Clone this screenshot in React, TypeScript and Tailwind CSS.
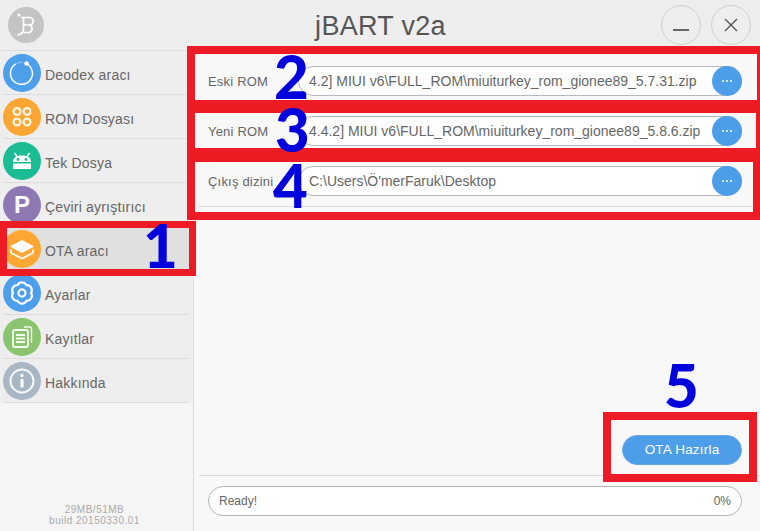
import type { ReactNode } from 'react';

function DeodexIcon() {
  return (
    <svg viewBox="0 0 38 38" className="w-full h-full" fill="none" stroke="white">
      <path d="M23.5 9.6 A11 11 0 1 1 13 9.8" strokeWidth="1.5" strokeOpacity="0.95" />
      <path d="M13 9.8 A11 11 0 0 1 20 8.2" strokeWidth="1" strokeOpacity="0.4" />
      <circle cx="23.5" cy="9.5" r="2.2" fill="white" stroke="none" />
    </svg>
  );
}

function RomIcon() {
  return (
    <svg viewBox="0 0 38 38" className="w-full h-full" fill="none" stroke="white" strokeWidth="2.2" strokeOpacity="0.9">
      <circle cx="14" cy="13.5" r="3.4" />
      <circle cx="24" cy="13.5" r="3.4" />
      <circle cx="14" cy="24" r="3.4" />
      <circle cx="24" cy="24" r="3.4" />
    </svg>
  );
}

function AndroidIcon() {
  return (
    <svg viewBox="0 0 38 38" className="w-full h-full">
      <path d="M11.5 11l2.5 3.5M26.5 11L24 14.5" stroke="white" strokeWidth="1.4" />
      <path d="M10 20c0-4 3-6.5 9-6.5s9 2.5 9 6.5z" fill="white" />
      <rect x="10" y="21.5" width="18" height="5.5" fill="white" />
      <circle cx="15" cy="17.5" r="1.4" fill="#1abc94" />
      <circle cx="23" cy="17.5" r="1.4" fill="#1abc94" />
    </svg>
  );
}

function LayersIcon() {
  return (
    <svg viewBox="0 0 38 38" className="w-full h-full" fill="none">
      <path d="M19 11 L29.5 16.5 L19 22 L8.5 16.5 Z" fill="white" stroke="white" strokeWidth="1.8" strokeLinejoin="round" />
      <path d="M8 19.5v2.5q0 1 1 1.5L19 28.5l10-5q1-.5 1-1.5v-2.5" stroke="white" strokeWidth="1.8" strokeLinejoin="round" />
    </svg>
  );
}

function GearIcon() {
  return (
    <svg viewBox="0 0 38 38" className="w-full h-full" fill="none" stroke="white" strokeOpacity="0.95">
      <path
        d="M28 19A5 5 0 0 1 23.5 26.8A5 5 0 0 1 14.5 26.8A5 5 0 0 1 10 19A5 5 0 0 1 14.5 11.2A5 5 0 0 1 23.5 11.2A5 5 0 0 1 28 19Z"
        strokeWidth="2.2"
      />
      <circle cx="19" cy="19" r="3.6" strokeWidth="2.2" />
    </svg>
  );
}

function DocsIcon() {
  return (
    <svg viewBox="0 0 38 38" className="w-full h-full" fill="none" stroke="white" strokeOpacity="0.9">
      <path d="M21 9h5.5a2 2 0 0 1 2 2v14" strokeWidth="1.4" />
      <rect x="10" y="12" width="15" height="17" rx="2" strokeWidth="1.8" />
      <path d="M13 17h9M13 20.5h9M13 24h9" strokeWidth="1.8" />
    </svg>
  );
}

function InfoIcon() {
  return (
    <svg viewBox="0 0 38 38" className="w-full h-full" fill="none">
      <circle cx="19" cy="19" r="11.5" stroke="white" strokeWidth="2" strokeOpacity="0.9" />
      <circle cx="19" cy="13.5" r="1.7" fill="white" />
      <rect x="17.5" y="17" width="3" height="8.5" rx="0.5" fill="white" />
    </svg>
  );
}

function NavItem({ color, icon, label, active }: { color: string; icon: ReactNode; label: string; active?: boolean }) {
  return (
    <div className={`h-11 relative flex items-center pl-[3px] ${active ? 'bg-[#e0e0e0]' : ''}`}>
      <div className={`w-[38px] h-[38px] rounded-full shrink-0 flex items-center justify-center ${color}`}>{icon}</div>
      <span className="ml-[4px] mt-1 text-[14px] text-[#666] tracking-[0.2px]">{label}</span>
      <div className="absolute left-1 right-[5px] bottom-0 h-px bg-[#dcdcdc]" />
    </div>
  );
}

function PathRow({ label, value }: { label: string; value: string }) {
  return (
    <div className="h-[50px] flex items-center pl-[14px] pr-[18px]">
      <span className="w-[90px] shrink-0 text-[13px] text-[#666] tracking-[0.2px] mt-[2px]">{label}</span>
      <div className="flex-1 min-w-0 h-[30px] relative rounded-full bg-white border border-[#b5b8c0] flex items-center pl-[10px] pr-[44px] overflow-hidden">
        <span className="text-[14px] text-[#666] whitespace-nowrap">{value}</span>
      </div>
      <button className="w-[30px] h-[30px] -ml-[30px] relative rounded-full bg-[#4d9de8] text-white flex items-center justify-center gap-[2px]">
        <span className="w-[2px] h-[2px] rounded-full bg-white" />
        <span className="w-[2px] h-[2px] rounded-full bg-white" />
        <span className="w-[2px] h-[2px] rounded-full bg-white" />
      </button>
    </div>
  );
}

export default function App() {
  return (
    <div className="w-[760px] h-[531px] relative overflow-hidden flex flex-col bg-[#f8f8f9] font-['Liberation_Sans',Arial,sans-serif]">
      {/* Title bar */}
      <header className="h-[51px] shrink-0 bg-[#eeeeef] border-b border-[#dcdcdc] flex items-center pl-2 pr-[9px]">
        <div className="w-9 h-9 rounded-full bg-[#c4c4c4] -mt-[1px] shrink-0">
          <svg viewBox="0 0 36 36" className="w-full h-full" fill="none" stroke="white" strokeWidth="1.7">
            <circle cx="11" cy="8" r="1.5" fill="white" stroke="none" />
            <path d="M13 10.5h2.5v12c0 3-2.5 5-6 5.5" />
            <path d="M15.5 10.5h6a3.5 3.5 0 0 1 0 7.5h-6M21.5 18a4 4 0 0 1 0 7.5h-6" />
          </svg>
        </div>
        <h1 className="flex-1 text-center text-[27px] text-[#555] tracking-[0.3px] ml-[56px] mt-[3px]">jBART v2a</h1>
        <div className="flex gap-[10px] -mt-[1px]">
          <button className="w-10 h-10 rounded-full border border-[#cfcfcf] flex items-center justify-center">
            <span className="w-4 h-[2px] bg-[#666] mt-[10px]" />
          </button>
          <button className="w-10 h-10 rounded-full border border-[#cfcfcf] flex items-center justify-center">
            <svg viewBox="0 0 16 16" className="w-4 h-4" stroke="#555" strokeWidth="1.4">
              <path d="M2 2l12 12M14 2L2 14" />
            </svg>
          </button>
        </div>
      </header>

      <div className="flex-1 flex min-h-0">
        {/* Sidebar */}
        <aside className="w-[194px] shrink-0 bg-[#f5f5f5] border-r border-[#dedede] flex flex-col">
          <nav className="bg-[#eeeeee]">
            <NavItem color="bg-[#4d9fec]" icon={<DeodexIcon />} label="Deodex aracı" />
            <NavItem color="bg-[#fda632]" icon={<RomIcon />} label="ROM Dosyası" />
            <NavItem color="bg-[#1abc94]" icon={<AndroidIcon />} label="Tek Dosya" />
            <NavItem
              color="bg-[#8e78b4]"
              icon={<span className="text-white font-bold text-[24px] leading-none">P</span>}
              label="Çeviri ayrıştırıcı"
            />
            <NavItem color="bg-[#fda632]" icon={<LayersIcon />} label="OTA aracı" active />
            <NavItem color="bg-[#4d9fec]" icon={<GearIcon />} label="Ayarlar" />
            <NavItem color="bg-[#8bc46e]" icon={<DocsIcon />} label="Kayıtlar" />
            <NavItem color="bg-[#a9b7c4]" icon={<InfoIcon />} label="Hakkında" />
          </nav>
          <div className="mt-auto pb-[5px] text-center text-[10px] leading-[11px] text-[#aaa] tracking-[0.5px] pr-[4px]">
            <div>29MB/51MB</div>
            <div>build 20150330.01</div>
          </div>
        </aside>

        {/* Main panel */}
        <main className="flex-1 min-w-0 flex flex-col">
          <div className="mt-[5px]">
            <PathRow label="Eski ROM" value="4.2] MIUI v6\FULL_ROM\miuiturkey_rom_gionee89_5.7.31.zip" />
            <PathRow label="Yeni ROM" value="4.4.2] MIUI v6\FULL_ROM\miuiturkey_rom_gionee89_5.8.6.zip" />
            <PathRow label="Çıkış dizini" value="C:\Users\Ö'merFaruk\Desktop" />
            <div className="mx-[4px] h-px bg-[#dcdcdc]" />
          </div>
          <div className="mt-auto">
            <div className="flex justify-end pr-[18px] pb-[10px]">
              <button className="w-[120px] h-[30px] rounded-full bg-[#4d9de8] border border-[#6aa9e4] text-white text-[13.5px] tracking-[0.2px]">
                OTA Hazırla
              </button>
            </div>
            <div className="h-px bg-[#dcdcdc] ml-[5px]" />
            <div className="pl-[14px] pr-[18px] pt-[10px] pb-[15px]">
              <div className="h-[30px] rounded-full bg-white border border-[#b5b5b5] flex items-center justify-between pl-[10px] pr-[10px] text-[12px] text-[#666]">
                <span>Ready!</span>
                <span>0%</span>
              </div>
            </div>
          </div>
        </main>
      </div>

      {/* Annotation boxes drawn over the screenshot */}
      <div className="absolute left-0 top-[221px] w-[196px] h-[55px] border-[7px] border-[#ed1c24]" />
      <div className="absolute left-[187px] top-[46px] w-[573px] h-[67px] border-[#ed1c24] border-t-8 border-l-8 border-r-[3px] border-b-[13px]" />
      <div className="absolute left-[187px] top-[113px] w-[573px] h-[49px] border-[#ed1c24] border-l-8 border-r-[4px] border-b-[14px]" />
      <div className="absolute left-[187px] top-[162px] w-[573px] h-[58px] border-[#ed1c24] border-l-8 border-r-[7px] border-b-8" />
      <div className="absolute left-[603px] top-[412px] w-[154px] h-[70px] border-8 border-[#ed1c24]" />

      <span className="absolute left-[143px] top-[223px] text-[60px] leading-[44px] font-black text-[#0000dd] font-['Lato',sans-serif]">1</span>
      <span className="absolute left-[274px] top-[54px] text-[60px] leading-[44px] font-black text-[#0000dd] font-['Lato',sans-serif]">2</span>
      <span className="absolute left-[275px] top-[107px] text-[60px] leading-[44px] font-black text-[#0000dd] font-['Lato',sans-serif]">3</span>
      <span className="absolute left-[273px] top-[163px] text-[60px] leading-[44px] font-black text-[#0000dd] font-['Lato',sans-serif]">4</span>
      <span className="absolute left-[664px] top-[363px] text-[60px] leading-[44px] font-black text-[#0000dd] font-['Lato',sans-serif]">5</span>
    </div>
  );
}
